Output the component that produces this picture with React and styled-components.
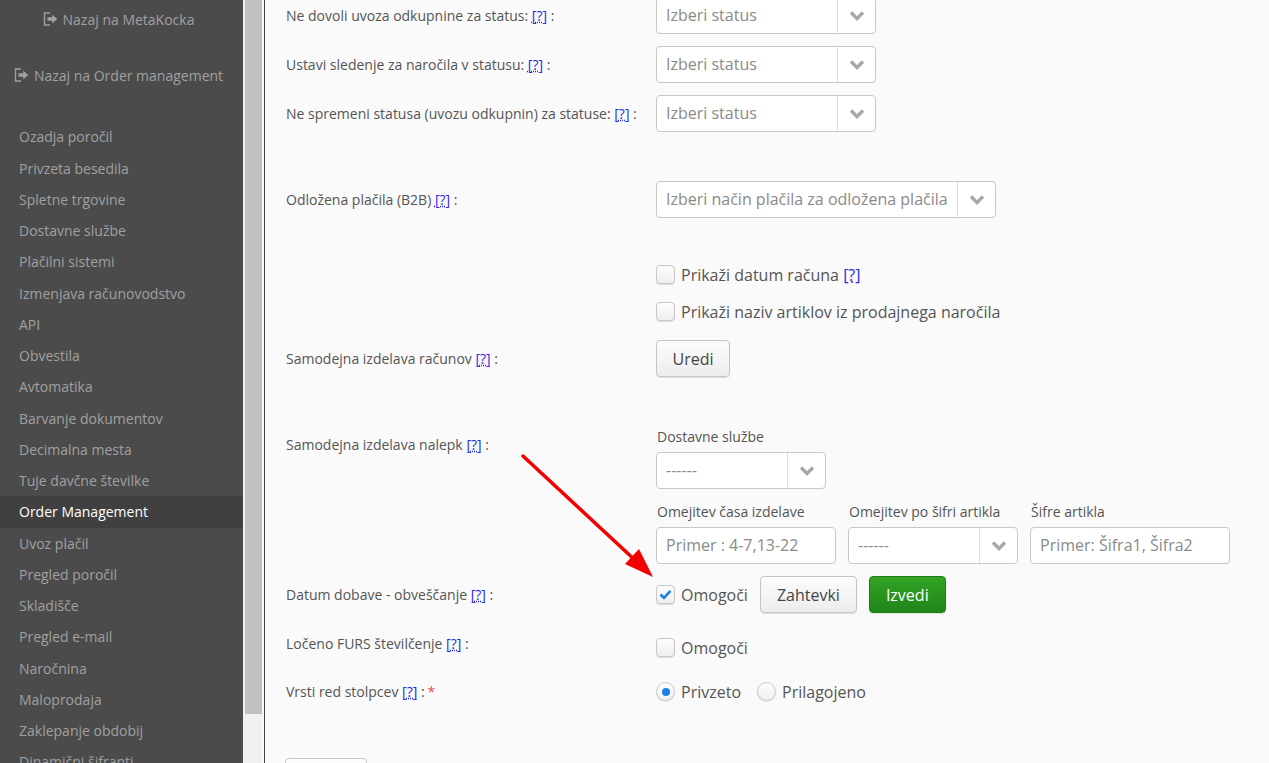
import styled, { createGlobalStyle } from 'styled-components';

const GlobalStyle = createGlobalStyle`
  html, body {
    margin: 0;
    height: 100%;
    overflow: hidden;
    background: #fafafa;
    font-family: "Open Sans", "Liberation Sans", sans-serif;
  }
`;

const Page = styled.div`
  display: flex;
  width: 1269px;
  height: 763px;
  overflow: hidden;
  position: relative;
`;

const Sidebar = styled.nav`
  width: 243px;
  height: 763px;
  flex: none;
  overflow: hidden;
  background: #4b4b4b;
  color: #a0a0a0;
  font-size: 14px;
`;

const BackLink = styled.a`
  display: flex;
  align-items: center;
  justify-content: center;
  gap: 5px;
  height: 20px;
  margin-top: ${p => p.$top}px;
  padding-right: 6px;
  color: #a0a0a0;
`;

const Menu = styled.div`
  margin-top: 36.25px;
`;

const MenuItem = styled.a`
  display: block;
  height: 31.25px;
  line-height: 31.25px;
  padding-left: 19px;
  color: ${p => (p.$active ? '#ffffff' : '#a0a0a0')};
  background: ${p => (p.$active ? '#404040' : 'transparent')};
`;

const Scrollbar = styled.div`
  width: 19px;
  height: 763px;
  flex: none;
  background: #f1f1f1;
  padding-left: 2px;
  box-sizing: border-box;
`;

const Thumb = styled.div`
  width: 17px;
  height: 714px;
  background: #c1c1c1;
`;

const Content = styled.main`
  flex: 1;
  height: 763px;
  margin-left: 2px;
  border-left: 1px solid #404040;
  background: #fafafa;
  padding-left: 21px;
  color: #555555;
  font-size: 14px;
`;

const Form = styled.div`
  margin-top: -3px;
  display: flex;
  flex-direction: column;
`;

const Row = styled.div`
  display: grid;
  grid-template-columns: 370px 1fr;
  align-items: ${p => p.$align || 'center'};
  margin-top: ${p => p.$top || 0}px;
  min-height: 37px;
`;

const Label = styled.div`
  color: #555555;
  white-space: nowrap;
  margin-top: ${p => p.$shift || 0}px;
`;

const Help = styled.a`
  color: #2a2ae0;
  text-decoration: underline;
  text-decoration-style: dotted;
`;

const Required = styled.span`
  color: #e94f4f;
  margin-left: 3px;
`;

const Select = styled.div`
  display: flex;
  width: ${p => p.$width}px;
  height: 37px;
  box-sizing: border-box;
  border: 1px solid #c8c8c8;
  border-radius: 4px;
  background: #ffffff;
  font-size: 16px;
  color: #8a8a8a;
`;

const SelectText = styled.div`
  flex: 1;
  padding-left: 9px;
  line-height: 35px;
  white-space: nowrap;
  overflow: hidden;
`;

const SelectArrow = styled.div`
  width: 37px;
  flex: none;
  display: flex;
  align-items: center;
  justify-content: center;
  border-left: 1px solid #dddddd;
`;

const CheckLine = styled.label`
  display: flex;
  align-items: center;
  gap: 6px;
  font-size: 16px;
  color: #555555;
  white-space: nowrap;
  height: 37px;
`;

const Check = styled.span`
  width: 19px;
  height: 19px;
  box-sizing: border-box;
  flex: none;
  display: flex;
  align-items: center;
  justify-content: center;
  border: 1px solid #c8c8c8;
  border-radius: ${p => (p.$round ? '50%' : '4px')};
  background: linear-gradient(#fdfdfd, #efefef);
  box-shadow: 0 1px 1px rgba(0, 0, 0, 0.12);
`;

const Dot = styled.span`
  width: 8px;
  height: 8px;
  border-radius: 50%;
  background: #1e7fe0;
`;

const Button = styled.button`
  height: 37px;
  padding: 0 ${p => p.$pad || 16}px;
  box-sizing: border-box;
  border: 1px solid ${p => (p.$green ? '#1f7a18' : '#c4c4c4')};
  border-radius: 4px;
  background: ${p => (p.$green ? 'linear-gradient(#33a326, #1f8619)' : 'linear-gradient(#fcfcfc, #ededed)')};
  color: ${p => (p.$green ? '#ffffff' : '#444444')};
  font-family: inherit;
  font-size: 16px;
  box-shadow: 0 1px 1px rgba(0, 0, 0, 0.1);
`;

const Inline = styled.div`
  display: flex;
  align-items: center;
  gap: ${p => p.$gap || 12}px;
`;

const Stack = styled.div`
  display: flex;
  flex-direction: column;
`;

const FieldRow = styled.div`
  display: flex;
  gap: 12px;
  margin-top: 13px;
`;

const Field = styled.div`
  display: flex;
  flex-direction: column;
  gap: 5px;
  width: ${p => p.$width}px;
`;

const FieldLabel = styled.div`
  font-size: 14px;
  line-height: 20px;
  padding-left: 1px;
  color: #555555;
  white-space: nowrap;
`;

const TextInput = styled.div`
  height: 37px;
  box-sizing: border-box;
  border: 1px solid #c8c8c8;
  border-radius: 4px;
  background: #ffffff;
  padding-left: 9px;
  line-height: 35px;
  font-size: 16px;
  color: #8a8a8a;
  white-space: nowrap;
`;

const SaveButton = styled.div`
  width: 82px;
  height: 37px;
  box-sizing: border-box;
  border: 1px solid #c8c8c8;
  border-radius: 4px;
  background: #fcfcfc;
  margin: 48px 0 0 -1px;
`;

const ArrowMark = styled.svg`
  position: absolute;
  left: 515px;
  top: 450px;
`;

const BackIcon = () => (
  <svg width="15" height="14" viewBox="0 0 15 14">
    <path d="M7 1H1.5v12H7" fill="none" stroke="#a0a0a0" strokeWidth="1.4" />
    <path d="M4.5 5.3h4.7V2.6L14.2 7l-5 4.4V8.7H4.5z" fill="#a0a0a0" />
  </svg>
);

const Chevron = () => (
  <svg width="16" height="11" viewBox="0 0 16 11">
    <path d="M2 2.5l6 6 6-6" fill="none" stroke="#a8a8a8" strokeWidth="3.4" />
  </svg>
);

const Tick = () => (
  <svg width="13" height="11" viewBox="0 0 13 11">
    <path d="M1.5 5.5l3.5 3.3 6.5-7" fill="none" stroke="#1e7fe0" strokeWidth="2.6" />
  </svg>
);

const HelpLink = () => <Help>[?]</Help>;

const SelectBox = ({ text, width }) => (
  <Select $width={width}>
    <SelectText>{text}</SelectText>
    <SelectArrow><Chevron /></SelectArrow>
  </Select>
);

const menuItems = [
  'Ozadja poročil', 'Privzeta besedila', 'Spletne trgovine', 'Dostavne službe', 'Plačilni sistemi',
  'Izmenjava računovodstvo', 'API', 'Obvestila', 'Avtomatika', 'Barvanje dokumentov', 'Decimalna mesta',
  'Tuje davčne številke', 'Order Management', 'Uvoz plačil', 'Pregled poročil', 'Skladišče',
  'Pregled e-mail', 'Naročnina', 'Maloprodaja', 'Zaklepanje obdobij', 'Dinamični šifranti',
];

export default function App() {
  return (
    <>
      <GlobalStyle />
      <Page>
        <Sidebar>
          <BackLink $top={9}><BackIcon />Nazaj na MetaKocka</BackLink>
          <BackLink $top={36}><BackIcon />Nazaj na Order management</BackLink>
          <Menu>
            {menuItems.map(item => (
              <MenuItem key={item} $active={item === 'Order Management'}>{item}</MenuItem>
            ))}
          </Menu>
        </Sidebar>
        <Scrollbar><Thumb /></Scrollbar>
        <Content>
          <Form>
            <Row>
              <Label>Ne dovoli uvoza odkupnine za status: <HelpLink /> :</Label>
              <SelectBox text="Izberi status" width={220} />
            </Row>
            <Row $top={12}>
              <Label>Ustavi sledenje za naročila v statusu: <HelpLink /> :</Label>
              <SelectBox text="Izberi status" width={220} />
            </Row>
            <Row $top={12}>
              <Label>Ne spremeni statusa (uvozu odkupnin) za statuse: <HelpLink /> :</Label>
              <SelectBox text="Izberi status" width={220} />
            </Row>
            <Row $top={49}>
              <Label>Odložena plačila (B2B) <HelpLink /> :</Label>
              <SelectBox text="Izberi način plačila za odložena plačila" width={340} />
            </Row>
            <Row $top={38}>
              <span />
              <Stack>
                <CheckLine><Check /><span>Prikaži datum računa <HelpLink /></span></CheckLine>
                <CheckLine><Check />Prikaži naziv artiklov iz prodajnega naročila</CheckLine>
              </Stack>
            </Row>
            <Row $top={10}>
              <Label>Samodejna izdelava računov <HelpLink /> :</Label>
              <Inline><Button $pad={15.5}>Uredi</Button></Inline>
            </Row>
            <Row $top={50} $align="start">
              <Label $shift={8}>Samodejna izdelava nalepk <HelpLink /> :</Label>
              <Stack>
                <Field $width={170}>
                  <FieldLabel>Dostavne službe</FieldLabel>
                  <SelectBox text="------" width={170} />
                </Field>
                <FieldRow>
                  <Field $width={180}>
                    <FieldLabel>Omejitev časa izdelave</FieldLabel>
                    <TextInput>Primer : 4-7,13-22</TextInput>
                  </Field>
                  <Field $width={170}>
                    <FieldLabel>Omejitev po šifri artikla</FieldLabel>
                    <SelectBox text="------" width={170} />
                  </Field>
                  <Field $width={200}>
                    <FieldLabel>Šifre artikla</FieldLabel>
                    <TextInput>Primer: Šifra1, Šifra2</TextInput>
                  </Field>
                </FieldRow>
              </Stack>
            </Row>
            <Row $top={12}>
              <Label>Datum dobave - obveščanje <HelpLink /> :</Label>
              <Inline>
                <CheckLine><Check><Tick /></Check>Omogoči</CheckLine>
                <Button $pad={16}>Zahtevki</Button>
                <Button $green>Izvedi</Button>
              </Inline>
            </Row>
            <Row $top={16}>
              <Label $shift={-8}>Ločeno FURS številčenje <HelpLink /> :</Label>
              <CheckLine><Check />Omogoči</CheckLine>
            </Row>
            <Row $top={7}>
              <Label>Vrsti red stolpcev <HelpLink /> :<Required>*</Required></Label>
              <Inline $gap={16}>
                <CheckLine><Check $round><Dot /></Check>Privzeto</CheckLine>
                <CheckLine><Check $round />Prilagojeno</CheckLine>
              </Inline>
            </Row>
            <SaveButton />
          </Form>
        </Content>
        <ArrowMark width="145" height="135" viewBox="0 0 145 135">
          <path d="M8 6L122 112" stroke="#f50000" strokeWidth="3.5" strokeLinecap="round" />
          <path d="M138 127L110 114L124 99z" fill="#f50000" />
        </ArrowMark>
      </Page>
    </>
  );
}
